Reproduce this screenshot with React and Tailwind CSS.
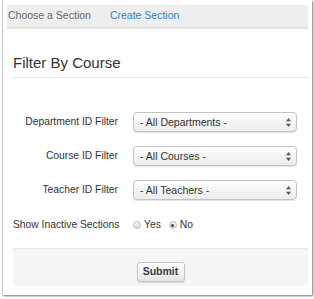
import React from 'react'

const font = { fontFamily: '"Liberation Sans", Arial, sans-serif' }

const Arrows = () => (
  <svg width="5" height="9" viewBox="0 0 5 9" className="shrink-0">
    <path d="M2.5 0 L5 3.2 L0 3.2 Z" fill="#555" />
    <path d="M2.5 9 L5 5.8 L0 5.8 Z" fill="#555" />
  </svg>
)

const SelectBox = ({ value }) => (
  <div className="flex h-[20px] w-[164px] items-center justify-between rounded-[4px] border border-[#c2c2c2] bg-gradient-to-b from-white to-[#ececec] pl-[6px] pr-[5px] shadow-[0_1px_1px_rgba(0,0,0,0.12)]">
    <span className="text-[10.5px] leading-none text-[#333]">{value}</span>
    <Arrows />
  </div>
)

const FilterRow = ({ label, value }) => (
  <div className="flex h-[20px] items-center">
    <div className="w-[105px] whitespace-nowrap text-right text-[10.3px] text-[#333]">{label}</div>
    <div className="ml-[15px]">
      <SelectBox value={value} />
    </div>
  </div>
)

const Radio = ({ checked }) => (
  <span className="flex h-[8px] w-[8px] items-center justify-center rounded-full border border-[#c0c0c0] bg-gradient-to-b from-[#f4f4f4] to-[#dcdcdc]">
    {checked && <span className="h-[3px] w-[3px] rounded-full bg-[#444]" />}
  </span>
)

export default function App() {
  return (
    <div className="h-[299px] w-[314px] overflow-hidden bg-white" style={font}>
      <div className="ml-[2px] flex h-[295px] w-[310px] flex-col border-l border-[#cfcfcf] bg-white pl-[4px] pr-[4px] shadow-[1px_1px_2px_rgba(0,0,0,0.55)]">
        {/* Tabs bar */}
        <div className="mt-[5px] flex h-[24px] items-center border-b-2 border-[#e2e2e2] bg-[#eeeeee] pl-[1px]">
          <span className="text-[10.5px] text-[#666]">Choose a Section</span>
          <span className="ml-[19px] text-[10.5px] text-[#2a86cc]">Create Section</span>
        </div>

        <div className="pl-[6px]">
          {/* Heading */}
          <div className="mt-[24px] border-b border-[#e6e6e6] pb-[4px] text-[15px] leading-[20px] text-[#333]">
            Filter By Course
          </div>

          {/* Filters */}
          <div className="mt-[34px] flex flex-col gap-[14px]">
            <FilterRow label="Department ID Filter" value="- All Departments -" />
            <FilterRow label="Course ID Filter" value="- All Courses -" />
            <FilterRow label="Teacher ID Filter" value="- All Teachers -" />
          </div>

          <div className="mt-[15px] flex h-[20px] items-center text-[10.3px] text-[#333]">
            <span className="w-[105px] whitespace-nowrap">Show Inactive Sections</span>
            <span className="ml-[15px]">
              <Radio />
            </span>
            <span className="ml-[3px]">Yes</span>
            <span className="ml-[8px]">
              <Radio checked />
            </span>
            <span className="ml-[3px]">No</span>
          </div>

          {/* Actions */}
          <div className="mt-[13px] flex justify-center border-t border-[#e8e8e8] bg-[#f5f5f5] pb-[4px] pt-[13px]">
            <button className="h-[20px] w-[48px] rounded-[3px] border border-[#c6c6c6] bg-gradient-to-b from-white to-[#e4e4e4] text-[10.5px] font-bold text-[#3a3a3a] shadow-[0_1px_1px_rgba(0,0,0,0.12)]">
              Submit
            </button>
          </div>
        </div>
      </div>
    </div>
  )
}
